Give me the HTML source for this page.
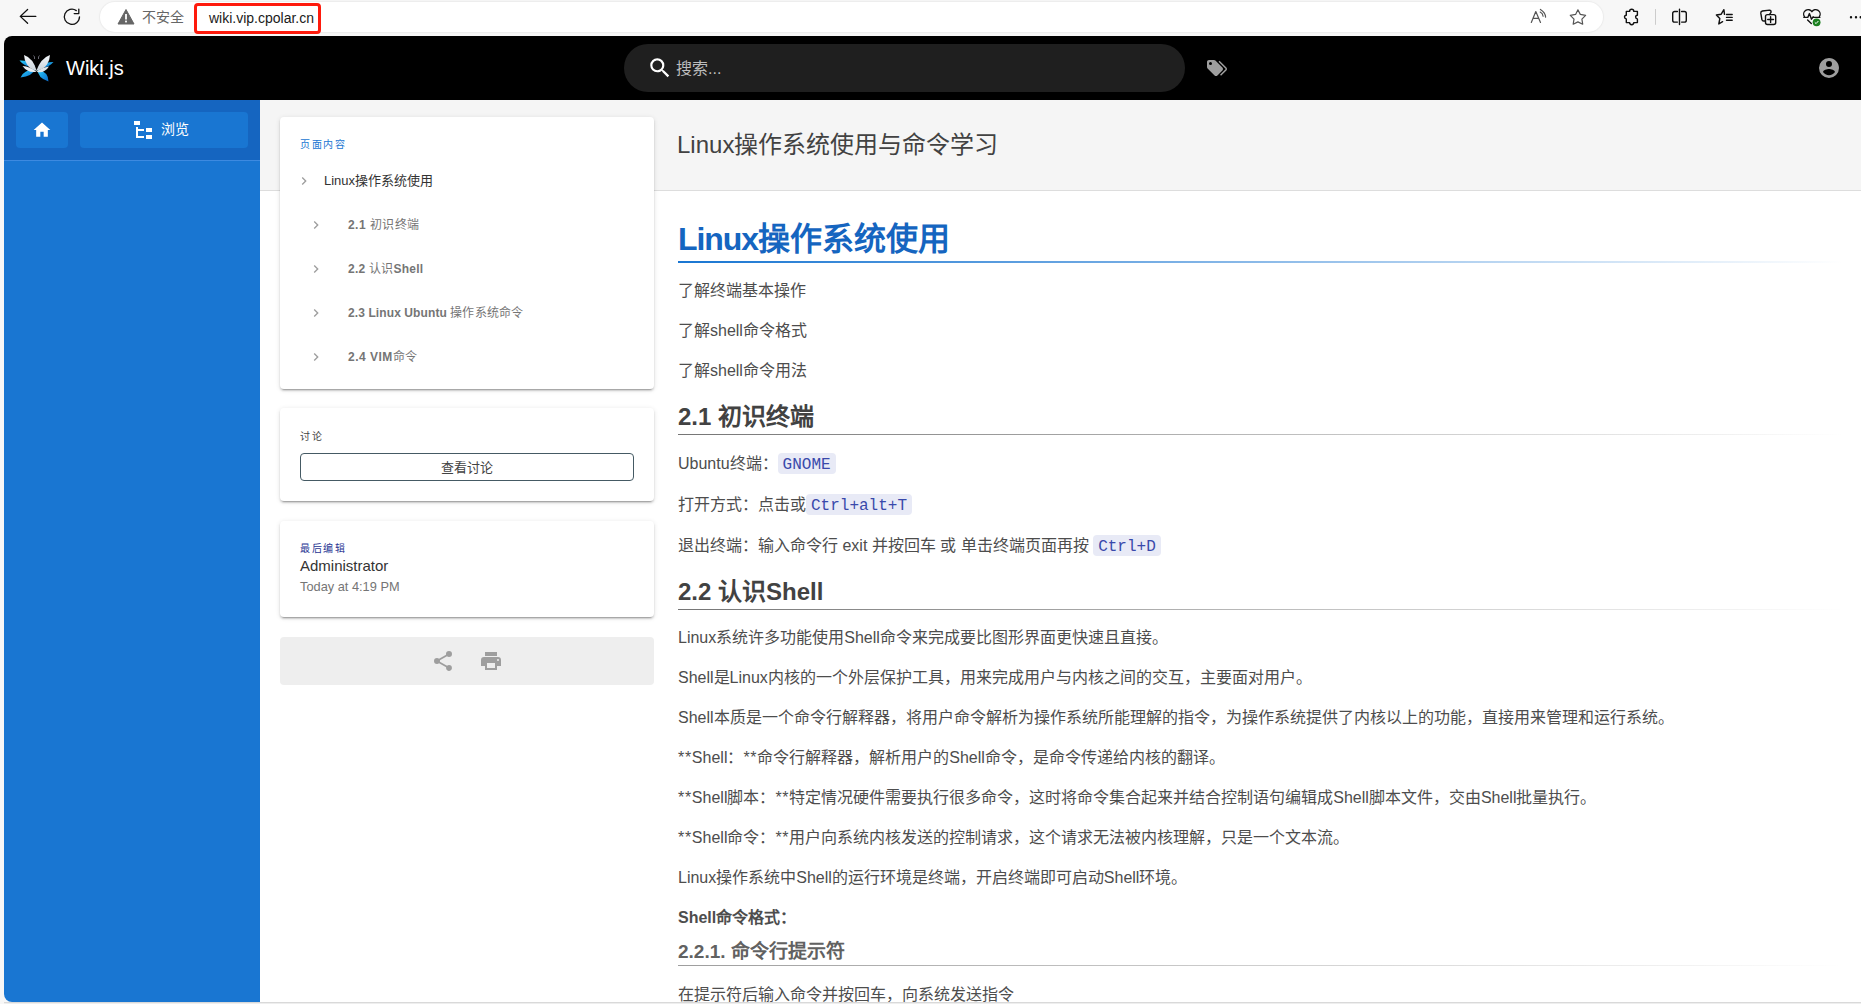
<!DOCTYPE html>
<html lang="zh-CN"><head><meta charset="utf-8">
<style>
*{box-sizing:border-box;margin:0;padding:0}
html,body{width:1861px;height:1004px;overflow:hidden;background:#f7f7f7;font-family:"Liberation Sans",sans-serif}
.a{position:absolute}
.t{position:absolute;white-space:nowrap;line-height:1}
svg{position:absolute;display:block}
#win{position:absolute;left:0;top:0;width:1861px;height:1004px;clip-path:inset(36px 0 2px 4px round 8px 0 0 8px)}
.card{position:absolute;left:280px;width:374px;background:#fff;border-radius:4px;box-shadow:0 3px 1px -2px rgba(0,0,0,.2),0 2px 2px 0 rgba(0,0,0,.14),0 1px 5px 0 rgba(0,0,0,.12)}
.p{position:absolute;left:678px;font-size:16px;color:#4d4d4d;white-space:nowrap;line-height:16px}
.code{display:inline-block;vertical-align:baseline;font-family:"Liberation Mono",monospace;background:#e8eaf6;color:#3949ab;border-radius:4px;padding:4px 5px 0;height:21px;line-height:17px}
.h2line{position:absolute;left:678px;width:1165px;height:1px;background:linear-gradient(to right,#757575,rgba(117,117,117,0) )}
</style></head><body>
<!-- browser chrome -->
<div class="a" style="left:0;top:0;width:1861px;height:36px;background:#f7f7f7"></div>
<div class="a" style="left:100px;top:2px;width:1503px;height:30px;background:#fff;border-radius:15px;box-shadow:0 0 1px 1px #ececec"></div>
<!-- back -->
<svg style="left:0;top:0" width="100" height="36" viewBox="0 0 100 36"><g fill="none" stroke="#111" stroke-width="1.3" stroke-linecap="round" stroke-linejoin="round">
<path d="M20.3 16.4H35.8M27.6 9.5L20.3 16.4L27.6 23.3"/>
<path d="M79.5 16.8A7.6 7.6 0 1 1 76.3 10.6"/><path d="M78.8 9.1V13.6H74.2"/>
</g></svg>
<!-- warning -->
<svg style="left:117px;top:8px" width="18" height="18" viewBox="0 0 18 18"><path d="M9 1.5L17 16H1Z" fill="#666" stroke="#666" stroke-width="1" stroke-linejoin="round"/><rect x="8.1" y="6" width="1.8" height="5.5" fill="#fff"/><rect x="8.1" y="12.6" width="1.8" height="1.8" fill="#fff"/></svg>
<div class="t" style="left:142px;top:10px;font-size:14px;color:#666">不安全</div>
<div class="a" style="left:194px;top:3px;width:127px;height:31px;border:3px solid #fe1a0c;border-radius:4px"></div>
<div class="t" style="left:209px;top:11px;font-size:14px;color:#1a1a1a">wiki.vip.cpolar.cn</div>
<!-- right chrome icons -->
<svg style="left:0;top:0" width="1861" height="36" viewBox="0 0 1861 36">
 <g fill="none" stroke="#555" stroke-width="1.2" stroke-linecap="round" stroke-linejoin="round">
  <path d="M1531.3 22.5L1535.8 11.6L1540.5 22.5M1533 18.4H1538.8"/>
  <path d="M1540.4 9.4Q1545.3 12.3 1545.6 17.1M1540.2 12.1Q1542.9 13.6 1543.1 16.2"/>
  <path d="M1577.9 9.8L1580.3 14.4L1585.6 15.3L1581.9 19.1L1582.7 24.2L1577.9 21.9L1573.2 24.2L1574 19.1L1570.3 15.3L1575.6 14.4Z"/>
 </g>
 <g fill="none" stroke="#111" stroke-width="1.4" stroke-linecap="round" stroke-linejoin="round">
  <path d="M1626.3 11.4H1629.6A2.1 2.1 0 0 1 1633.8 11.4H1637.4V15.3A1.8 1.8 0 0 0 1637.4 18.9V22.6H1633.8A2.1 2.1 0 0 1 1629.6 22.6H1626.3V18.9A1.8 1.8 0 0 1 1626.3 15.3Z"/>
  <path d="M1677.4 11.5H1674.6A1.9 1.9 0 0 0 1672.7 13.4V20.2A1.9 1.9 0 0 0 1674.6 22.1H1677.4M1681.6 11.5H1684.4A1.9 1.9 0 0 1 1686.3 13.4V20.2A1.9 1.9 0 0 1 1684.4 22.1H1681.6M1679.5 9.3V24.5"/>
  <path d="M1726.5 14.5H1732.2M1726.5 17.4H1732.2M1726.5 20.3H1732.2"/>
  <path d="M1724.5 14.3L1723.9 9.6L1721.2 14.2L1716.4 15L1719.8 18.6L1718.8 24L1722.6 21.7"/>
  <path d="M1769.6 14.4L1771 12.3Q1771.3 10.3 1769.5 10.1L1762.4 11Q1760.6 11.4 1760.8 13.2L1761.9 19.6Q1762.3 21 1763.6 21H1765.4"/>
  <rect x="1765.5" y="14.6" width="10.2" height="9.9" rx="2"/>
  <path d="M1770.6 16.6V22.4M1767.7 19.5H1773.5"/>
  <path d="M1804.4 16.6A3.95 3.95 0 0 1 1811.9 11.7A3.95 3.95 0 0 1 1819.4 16.6"/>
  <path d="M1803.9 17.4H1807.8L1809.4 13.6L1811.5 19.2L1813.1 16.8L1813.8 17.4H1819.8"/>
  <path d="M1807.6 20.1L1811.3 23.6"/>
  <path d="M1851 17.2h.01M1856 17.2h.01M1860.7 17.2h.01" stroke-width="2.4"/>
 </g>
 <path d="M1655.5 9V24.8" stroke="#ccc" stroke-width="1"/>
 <circle cx="1816.6" cy="22.3" r="3.9" fill="#1a7f1f"/>
 <path d="M1814.8 22.4L1816.1 23.6L1818.4 21" stroke="#fff" stroke-width="1" fill="none"/>
</svg>
<div id="win">
<div class="a" style="left:4px;top:36px;width:1857px;height:966px;background:#fff"></div>
<!-- header -->
<div class="a" style="left:0;top:36px;width:1861px;height:64px;background:#000"></div>
<svg style="left:19px;top:53px" width="35" height="30" viewBox="0 0 35 30">
 <defs><linearGradient id="bl" x1="0" y1="0" x2="1" y2="1"><stop offset="0" stop-color="#2ad2ff"/><stop offset="1" stop-color="#0b68c9"/></linearGradient>
 <linearGradient id="wh" x1="0" y1="0" x2="0" y2="1"><stop offset="0" stop-color="#f4f7fa"/><stop offset="1" stop-color="#c9d3dc"/></linearGradient></defs>
 <path d="M0.5,7.5 Q9,7 16,13 Q7,15.5 0.5,7.5Z" fill="url(#bl)"/>
 <path d="M34.5,9 Q26,9 19,14 Q28,16.5 34.5,9Z" fill="url(#bl)"/>
 <path d="M1.5,24.5 Q5,16.5 16.5,16 Q13,23.5 1.5,24.5Z" fill="url(#bl)"/>
 <path d="M29.5,28.5 Q29.5,19 18.5,16 Q18.5,25 29.5,28.5Z" fill="url(#bl)"/>
 <path d="M5,2 Q14,5 17.8,18 Q11,16 8,11.5 Q5.2,7 5,2Z" fill="url(#wh)"/>
 <path d="M31,2 Q22,5 17.2,18 Q25,16 28,11.5 Q30.8,7 31,2Z" fill="url(#wh)"/>
 <path d="M3.5,13 Q11,13.5 17.5,18.8 Q9,20.5 3.5,13Z" fill="#e9eef2"/>
 <path d="M30,13.5 Q23,14.5 17.5,18.8 Q25,21 30,13.5Z" fill="#dde4ea"/>
 <path d="M15.5,6 Q16,3.5 14.5,2.5M19.5,6 Q19,3.5 20.5,2.5" stroke="#aab" stroke-width=".6" fill="none"/>
</svg>
<div class="t" style="left:66px;top:58px;font-size:20px;color:#fff">Wiki.js</div>
<div class="a" style="left:624px;top:44px;width:561px;height:48px;border-radius:24px;background:#1f1f1f"></div>
<svg style="left:647px;top:55px" width="26" height="26" viewBox="0 0 24 24"><path fill="#fff" d="M9.5,3A6.5,6.5 0 0,1 16,9.5C16,11.11 15.41,12.59 14.44,13.73L14.71,14H15.5L20.5,19L19,20.5L14,15.5V14.71L13.73,14.44C12.59,15.41 11.11,16 9.5,16A6.5,6.5 0 0,1 3,9.5A6.5,6.5 0 0,1 9.5,3M9.5,5C7,5 5,7 5,9.5C5,12 7,14 9.5,14C12,14 14,12 14,9.5C14,7 12,5 9.5,5Z"/></svg>
<div class="t" style="left:676px;top:61px;font-size:16px;color:#bdbdbd">搜索...</div>
<svg style="left:1205px;top:56px" width="24" height="24" viewBox="0 0 24 24"><path fill="#9e9e9e" d="M5.5,9A1.5,1.5 0 0,0 7,7.5A1.5,1.5 0 0,0 5.5,6A1.5,1.5 0 0,0 4,7.5A1.5,1.5 0 0,0 5.5,9M17.41,11.58C17.77,11.94 18,12.44 18,13C18,13.55 17.78,14.05 17.41,14.41L12.41,19.41C12.05,19.770 11.55,20 11,20C10.45,20 9.95,19.78 9.58,19.41L2.59,12.42C2.22,12.05 2,11.55 2,11V6C2,4.89 2.89,4 4,4H9C9.55,4 10.05,4.22 10.41,4.58L17.41,11.58M13.54,5.71L14.54,4.71L21.41,11.58C21.780,11.94 22,12.45 22,13C22,13.55 21.78,14.05 21.42,14.41L16.04,19.79L15.04,18.79L20.75,13L13.54,5.71Z"/></svg>
<svg style="left:1817px;top:56px" width="24" height="24" viewBox="0 0 24 24"><path fill="#9e9e9e" d="M12,19.2C9.5,19.2 7.29,17.92 6,16C6.03,14 10,12.9 12,12.9C14,12.9 17.97,14 18,16C16.71,17.92 14.5,19.2 12,19.2M12,5A3,3 0 0,1 15,8A3,3 0 0,1 12,11A3,3 0 0,1 9,8A3,3 0 0,1 12,5M12,2A10,10 0 0,0 2,12A10,10 0 0,0 12,22A10,10 0 0,0 22,12C22,6.47 17.5,2 12,2Z"/></svg>

<!-- sidebar -->
<div class="a" style="left:4px;top:100px;width:256px;height:904px;background:#1976d2"></div>
<div class="a" style="left:4px;top:100px;width:256px;height:60px;background:#1565c0"></div>
<div class="a" style="left:4px;top:160px;width:256px;height:1px;background:#3d8ae0"></div>
<div class="a" style="left:16px;top:112px;width:52px;height:36px;background:#1976d2;border-radius:4px"></div>
<div class="a" style="left:80px;top:112px;width:168px;height:36px;background:#1976d2;border-radius:4px"></div>
<svg style="left:32px;top:120px" width="20" height="20" viewBox="0 0 24 24"><path fill="#fff" d="M10,20V14H14V20H19V12H22L12,3L2,12H5V20H10Z"/></svg>
<svg style="left:131px;top:118px" width="24" height="24" viewBox="0 0 24 24"><path fill="#fff" d="M3,3H9V7H3V3M15,10H21V14H15V10M15,17H21V21H15V17M13,13H7V18H13V20H7L5,20V9H7V11H13V13Z"/></svg>
<div class="t" style="left:161px;top:122px;font-size:14px;color:#fff">浏览</div>

<!-- page band -->
<div class="a" style="left:260px;top:100px;width:1601px;height:90px;background:#f5f5f5"></div>
<div class="a" style="left:260px;top:190px;width:1601px;height:1px;background:#ddd"></div>
<div class="t" style="left:677px;top:133px;font-size:24px;color:#424242">Linux操作系统使用与命令学习</div>

<!-- left column cards -->
<div class="card" style="top:117px;height:272px"></div>
<div class="t" style="left:300px;top:140px;font-size:10px;letter-spacing:1.67px;color:#1976d2">页面内容</div>
<svg style="left:296px;top:173px" width="16" height="16" viewBox="0 0 24 24"><path fill="#9e9e9e" d="M8.59,16.58L13.17,12L8.59,7.41L10,6L16,12L10,18L8.59,16.58Z"/></svg>
<div class="t" style="left:324px;top:174px;font-size:13px;color:#333">Linux操作系统使用</div>
<svg style="left:308px;top:217px" width="16" height="16" viewBox="0 0 24 24"><path fill="#9e9e9e" d="M8.59,16.58L13.17,12L8.59,7.41L10,6L16,12L10,18L8.59,16.58Z"/></svg>
<div class="t" style="left:348px;top:219px;font-size:12px;letter-spacing:.45px;color:#757575"><b>2.1 </b>初识终端</div>
<svg style="left:308px;top:261px" width="16" height="16" viewBox="0 0 24 24"><path fill="#9e9e9e" d="M8.59,16.58L13.17,12L8.59,7.41L10,6L16,12L10,18L8.59,16.58Z"/></svg>
<div class="t" style="left:348px;top:263px;font-size:12px;letter-spacing:.25px;color:#757575"><b>2.2 </b>认识<b>Shell</b></div>
<svg style="left:308px;top:305px" width="16" height="16" viewBox="0 0 24 24"><path fill="#9e9e9e" d="M8.59,16.58L13.17,12L8.59,7.41L10,6L16,12L10,18L8.59,16.58Z"/></svg>
<div class="t" style="left:348px;top:307px;font-size:12px;letter-spacing:.1px;color:#757575"><b>2.3 Linux Ubuntu </b>操作系统命令</div>
<svg style="left:308px;top:349px" width="16" height="16" viewBox="0 0 24 24"><path fill="#9e9e9e" d="M8.59,16.58L13.17,12L8.59,7.41L10,6L16,12L10,18L8.59,16.58Z"/></svg>
<div class="t" style="left:348px;top:351px;font-size:12px;letter-spacing:.5px;color:#757575"><b>2.4 VIM</b>命令</div>

<div class="card" style="top:408px;height:93px"></div>
<div class="t" style="left:300px;top:432px;font-size:10px;letter-spacing:1.67px;color:#424242">讨论</div>
<div class="a" style="left:300px;top:453px;width:334px;height:28px;border:1px solid #455a64;border-radius:4px"></div>
<div class="t" style="left:441px;top:461px;font-size:13px;color:#424242">查看讨论</div>

<div class="card" style="top:521px;height:96px"></div>
<div class="t" style="left:300px;top:544px;font-size:10px;letter-spacing:1.67px;color:#283593">最后编辑</div>
<div class="t" style="left:300px;top:558px;font-size:15px;color:#333">Administrator</div>
<div class="t" style="left:300px;top:581px;font-size:12.8px;color:#757575">Today at 4:19 PM</div>

<div class="a" style="left:280px;top:637px;width:374px;height:48px;background:#eee;border-radius:4px"></div>
<svg style="left:431px;top:649px" width="24" height="24" viewBox="0 0 24 24"><path fill="#9e9e9e" d="M18,16.08C17.24,16.08 16.56,16.38 16.04,16.85L8.91,12.7C8.96,12.47 9,12.24 9,12C9,11.76 8.96,11.53 8.91,11.3L15.96,7.19C16.5,7.69 17.21,8 18,8A3,3 0 0,0 21,5A3,3 0 0,0 18,2A3,3 0 0,0 15,5C15,5.24 15.04,5.47 15.09,5.7L8.04,9.81C7.5,9.31 6.79,9 6,9A3,3 0 0,0 3,12A3,3 0 0,0 6,15C6.79,15 7.5,14.69 8.04,14.19L15.16,18.34C15.11,18.55 15.08,18.77 15.08,19C15.08,20.61 16.39,21.91 18,21.91C19.61,21.91 20.92,20.61 20.92,19A2.92,2.92 0 0,0 18,16.08Z"/></svg>
<svg style="left:479px;top:649px" width="24" height="24" viewBox="0 0 24 24"><path fill="#9e9e9e" d="M18,3H6V7H18M19,12A1,1 0 0,1 18,11A1,1 0 0,1 19,10A1,1 0 0,1 20,11A1,1 0 0,1 19,12M16,19H8V14H16M19,8H5A3,3 0 0,0 2,11V17H6V21H18V17H22V11A3,3 0 0,0 19,8Z"/></svg>

<!-- CONTENT -->
<div class="t" style="left:678px;top:223px;font-size:32px;font-weight:bold;color:#1565c0"><span style="letter-spacing:-1.1px">Linux</span>操作系统使用</div>
<div class="a" style="left:678px;top:261px;width:1165px;height:2px;background:linear-gradient(to right,#1976d2,rgba(25,118,210,.5) 50%,rgba(25,118,210,0))"></div>
<div class="p" style="top:283px">了解终端基本操作</div>
<div class="p" style="top:323px">了解shell命令格式</div>
<div class="p" style="top:363px">了解shell命令用法</div>
<div class="t" style="left:678px;top:405px;font-size:24px;font-weight:bold;color:#424242">2.1 初识终端</div>
<div class="h2line" style="top:434px"></div>
<div class="p" style="top:453px">Ubuntu终端：<span class="code">GNOME</span></div>
<div class="p" style="top:494px">打开方式：点击或<span class="code">Ctrl+alt+T</span></div>
<div class="p" style="top:535px">退出终端：输入命令行 exit 并按回车 或 单击终端页面再按 <span class="code">Ctrl+D</span></div>
<div class="t" style="left:678px;top:580px;font-size:24px;font-weight:bold;color:#424242">2.2 认识Shell</div>
<div class="h2line" style="top:609px"></div>
<div class="p" style="top:630px">Linux系统许多功能使用Shell命令来完成要比图形界面更快速且直接。</div>
<div class="p" style="top:670px">Shell是Linux内核的一个外层保护工具，用来完成用户与内核之间的交互，主要面对用户。</div>
<div class="p" style="top:710px">Shell本质是一个命令行解释器，将用户命令解析为操作系统所能理解的指令，为操作系统提供了内核以上的功能，直接用来管理和运行系统。</div>
<div class="p" style="top:750px"><span style="letter-spacing:.7px">**</span>Shell：<span style="letter-spacing:.7px">**</span>命令行解释器，解析用户的Shell命令，是命令传递给内核的翻译。</div>
<div class="p" style="top:790px"><span style="letter-spacing:.7px">**</span>Shell脚本：<span style="letter-spacing:.7px">**</span>特定情况硬件需要执行很多命令，这时将命令集合起来并结合控制语句编辑成Shell脚本文件，交由Shell批量执行。</div>
<div class="p" style="top:830px"><span style="letter-spacing:.7px">**</span>Shell命令：<span style="letter-spacing:.7px">**</span>用户向系统内核发送的控制请求，这个请求无法被内核理解，只是一个文本流。</div>
<div class="p" style="top:870px">Linux操作系统中Shell的运行环境是终端，开启终端即可启动Shell环境。</div>
<div class="p" style="top:910px;font-weight:bold">Shell命令格式：</div>
<div class="t" style="left:678px;top:942px;font-size:19px;font-weight:bold;color:#616161">2.2.1. 命令行提示符</div>
<div class="h2line" style="top:965px;background:linear-gradient(to right,#9e9e9e,rgba(158,158,158,0))"></div>
<div class="p" style="top:987px">在提示符后输入命令并按回车，向系统发送指令</div>

</div>
<div class="a" style="left:4px;top:1002px;width:1857px;height:1px;background:#d9d9d9"></div>
<div class="a" style="left:4px;top:1003px;width:1857px;height:1px;background:#eee"></div>
</body></html>
